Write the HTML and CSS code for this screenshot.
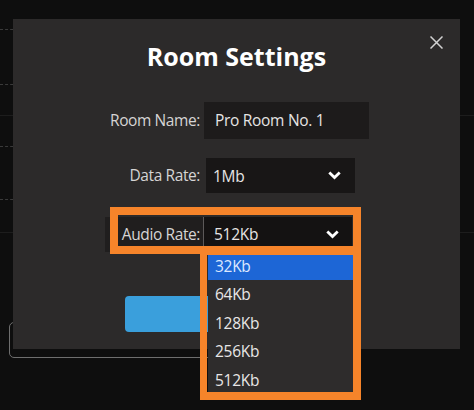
FILE: index.html
```html
<!DOCTYPE html>
<html lang="en">
<head>
<meta charset="utf-8">
<title>Room Settings</title>
<link rel="stylesheet" href="styles.css">
</head>
<body>
<div class="page">
  <div class="backdrop">
    <div class="band band-a">
      <div class="side">
        <div class="srow srow-1"></div>
        <div class="srow srow-2"></div>
      </div>
    </div>
    <div class="band band-b">
      <div class="side">
        <div class="srow srow-3"></div>
        <div class="srow srow-4"></div>
      </div>
    </div>
    <div class="band band-c">
      <div class="ghost-field"></div>
    </div>
  </div>

  <div class="modal">
    <button class="close" aria-label="Close">
      <svg width="13" height="13" viewBox="0 0 13 13"><path d="M0.5 0.5 L12.5 12.5 M12.5 0.5 L0.5 12.5" stroke="#d2d2d2" stroke-width="1.5" fill="none"/></svg>
    </button>
    <h1 class="title">Room Settings</h1>
    <div class="form">
      <label class="label">Room Name:</label>
      <div class="input">Pro Room No. 1</div>

      <label class="label">Data Rate:</label>
      <div class="select select-data">
        <span>1Mb</span>
        <svg class="chev" width="13" height="9" viewBox="0 0 13 9"><path d="M1.3 1.5 L6.5 6.6 L11.7 1.5" stroke="#fff" stroke-width="2.8" fill="none"/></svg>
      </div>

      <label class="label label-audio"><span class="hl-label">Audio Rate:</span></label>
      <div class="select select-audio">
        <span>512Kb</span>
        <svg class="chev" width="13" height="9" viewBox="0 0 13 9"><path d="M1.3 1.5 L6.5 6.6 L11.7 1.5" stroke="#fff" stroke-width="2.8" fill="none"/></svg>
        <ul class="options">
          <li class="opt opt-active">32Kb</li>
          <li class="opt">64Kb</li>
          <li class="opt">128Kb</li>
          <li class="opt">256Kb</li>
          <li class="opt">512Kb</li>
        </ul>
      </div>
    </div>
    <button class="save" aria-label="Save"></button>
  </div>

  <div class="annot annot-row"></div>
  <div class="annot annot-list"></div>
</div>
</body>
</html>
```

FILE: styles.css
```css
* { box-sizing: border-box; }

html, body {
  margin: 0;
  padding: 0;
}

body {
  width: 474px;
  height: 410px;
  overflow: hidden;
  background: #0e0e0e;
  font-family: "Open Sans", "Noto Sans", sans-serif;
}

.page {
  position: relative;
  width: 474px;
  height: 410px;
}

/* ---------- backdrop (page behind the dialog) ---------- */
.backdrop {
  display: flex;
  flex-direction: column;
  height: 100%;
}

.band {
  border-bottom: 1px solid #1d1d1d;
}

.band-a { height: 116px; }
.band-b { height: 117px; }
.band-c {
  flex: 1;
  border-bottom: none;
  padding-top: 89px;
  padding-left: 9px;
}

.side {
  width: 150px;
  display: flex;
  flex-direction: column;
}

.srow { border-bottom: 1px dashed #3a3a3a; }
.srow-1 { height: 30px; }
.srow-2 { height: 55px; }
.srow-3 { height: 31px; }
.srow-4 { height: 53px; }

.ghost-field {
  width: 260px;
  height: 36px;
  border: 1.5px solid #6e6e6e;
  border-radius: 5px;
}

/* ---------- dialog ---------- */
.modal {
  position: absolute;
  left: 13px;
  top: 19px;
  width: 447px;
  height: 330px;
  background: #2c2a2a;
  display: flex;
  flex-direction: column;
  padding-top: 20px;
}

.close {
  position: absolute;
  left: 417px;
  top: 17px;
  width: 13px;
  height: 13px;
  padding: 0;
  border: 0;
  background: none;
  display: block;
}
.close svg { display: block; }

.title {
  margin: 0;
  font-size: 25px;
  line-height: 34px;
  font-weight: 700;
  color: #ffffff;
  text-align: center;
}

.form {
  margin-top: 29px;
  display: grid;
  grid-template-columns: 187px 1fr;
  column-gap: 4px;
  row-gap: 19px;
  align-items: center;
  font-size: 15.5px;
}

.label {
  text-align: right;
  color: #d6d4d4;
  letter-spacing: -0.4px;
  line-height: 21px;
}

.input {
  width: 165px;
  height: 37px;
  background: #1d1b1b;
  color: #e6e4e4;
  padding-left: 11px;
  line-height: 37px;
  letter-spacing: -0.3px;
}

.select {
  position: relative;
  width: 149px;
  height: 35px;
  background: #181616;
  color: #e6e4e4;
  display: flex;
  align-items: center;
  justify-content: space-between;
  letter-spacing: -0.3px;
}

.select-data {
  margin-left: 2px;
  padding: 0 14px 0 7px;
}

.label-audio,
.select-audio {
  margin-top: 4.5px;
}

.select-audio {
  margin-left: -1px;
  padding: 0 13px 0 10px;
  background: #141212;
  border-left: 1px solid #5c5959;
  align-self: stretch;
  height: 35px;
}

.label-audio {
  align-self: stretch;
  display: flex;
}

.hl-label {
  flex: 1;
  margin-left: 92px;
  margin-right: -3px;
  padding-right: 3px;
  background: #201e1e;
  display: flex;
  align-items: center;
  justify-content: flex-end;
}

.chev { display: block; }

.options {
  position: absolute;
  left: 4px;
  top: 100%;
  width: 146px;
  margin: 0;
  padding: 0;
  list-style: none;
  background: #2e2c2c;
  z-index: 2;
}

.opt {
  height: 28.5px;
  padding: 1px 0 0 7px;
  line-height: 27.5px;
  color: #e8e6e6;
}

.opt-active {
  background: #1d66d6;
  color: #dce8ff;
}

.save {
  align-self: center;
  margin-top: 44.5px;
  width: 223px;
  height: 36px;
  border: 0;
  border-radius: 4px;
  background: #3a9fdc;
}

/* ---------- annotation frames ---------- */
.annot {
  position: absolute;
  border: 8px solid #f6842a;
  z-index: 5;
}

.annot-row {
  left: 110px;
  top: 207px;
  width: 251px;
  height: 47px;
}

.annot-list {
  left: 200px;
  top: 247px;
  width: 161px;
  height: 153px;
  border-width: 8px 8px 8px 7px;
}
```
